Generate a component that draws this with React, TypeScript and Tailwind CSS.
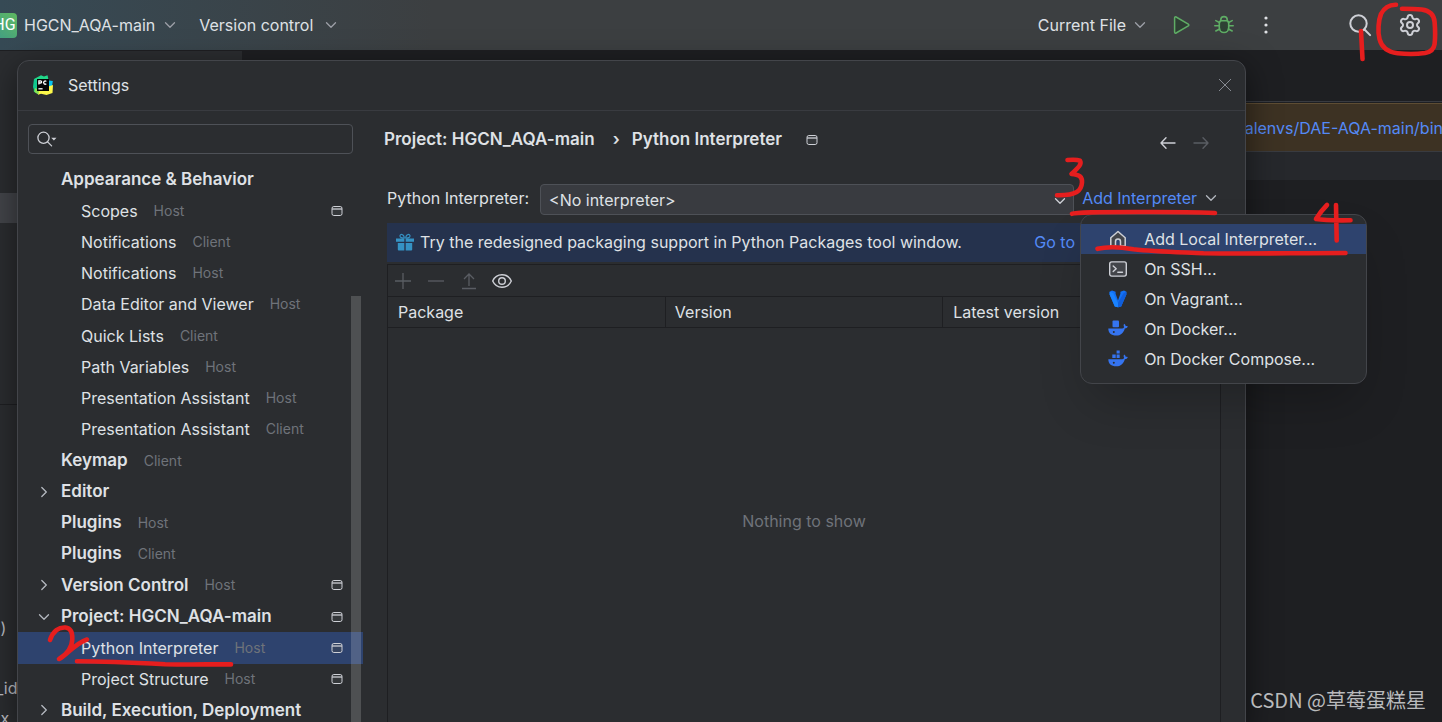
import type { ReactNode } from "react";
import { Settings } from "lucide-react";

type IconProps = { className?: string };

function Chevron({ className = "" }: IconProps) {
  return (
    <svg viewBox="0 0 12 12" className={`size-3 shrink-0 ${className}`} fill="none" stroke="currentColor" strokeWidth="1.3" strokeLinecap="round" strokeLinejoin="round">
      <path d="M1.5 3.8 6 8.3l4.5-4.5" />
    </svg>
  );
}

function WindowIcon({ className = "" }: IconProps) {
  return (
    <svg viewBox="0 0 12 12" className={`size-3 shrink-0 ${className}`} fill="none" stroke="#ced0d6">
      <rect x="1" y="1.5" width="10" height="9" rx="1.8" fill="#43454a" fillOpacity="0.4" />
      <path d="M1 4h10" strokeWidth="1.3" />
    </svg>
  );
}

function PlayIcon() {
  return (
    <svg viewBox="0 0 20 20" className="size-5" fill="#2e4034" stroke="#5fad65" strokeWidth="1.5" strokeLinejoin="round">
      <path d="M2.6 2.9c0-.9.8-1.3 1.5-.9l12.2 7.1c.7.4.7 1.4 0 1.8L4.1 18c-.7.4-1.5 0-1.5-.9z" />
    </svg>
  );
}

function BugIcon() {
  return (
    <svg viewBox="0 0 20 20" className="size-5" fill="none" stroke="#5fad65" strokeWidth="1.6" strokeLinecap="round" strokeLinejoin="round">
      <path d="M6.8 5.6v-.8a3.2 3.2 0 0 1 6.4 0v.8" />
      <path d="M7.6 5.8h4.8a2.3 2.3 0 0 1 2.3 2.3v4.7a4.7 4.7 0 0 1-9.4 0V8.1a2.3 2.3 0 0 1 2.3-2.3z" fill="#2e4034" />
      <path d="M.8 10.800h4.400M14.800 10.800h4.400M1.800 5.600l3.800 2M18.200 5.600l-3.800 2M1.800 16l3.900-2M18.200 16l-3.900-2" />
    </svg>
  );
}

function MoreIcon() {
  return (
    <svg viewBox="0 0 20 20" className="size-5" fill="#dfe1e5">
      <circle cx="10" cy="3" r="1.6" />
      <circle cx="10" cy="10" r="1.6" />
      <circle cx="10" cy="17" r="1.6" />
    </svg>
  );
}

function SearchIcon() {
  return (
    <svg viewBox="0 0 24 24" className="size-6" fill="none" stroke="#ced0d6" strokeWidth="2" strokeLinecap="round">
      <circle cx="10.5" cy="10.5" r="8.2" />
      <path d="m16.5 16.5 5.6 5.6" />
    </svg>
  );
}

function PyCharmLogo() {
  return (
    <svg viewBox="0 0 20 20" className="size-5" aria-hidden="true">
      <path d="M1 4 8 .2l3 1.2 3.5-1.2.8 3.2-4 6L5 19.2.8 16.5z" fill="#21d789" />
      <path d="m0 12 1-8 4 2 2 13-5-2z" fill="#12c98f" />
      <path d="m16 5.5 3.8.5-.6 4.5L15 14z" fill="#07c3f2" />
      <path d="m5 15.5 10-4 5-1.5-.5 8-6 2L8 18.8 5 19.8z" fill="#fcf84a" />
      <path d="m2 13 4 2-.5 4.5-4-2.5z" fill="#8be04e" />
      <rect x="4" y="4" width="12" height="12" fill="#050505" />
      <g fill="none" stroke="#fff" strokeWidth="1.3">
        <path d="M5.9 9.4V5.8h1.6a1.1 1.1 0 0 1 0 2.2H5.9M13.3 6.4a1.6 1.6 0 1 0 0 2.4" />
        <path d="M5.4 13.8h4.2" />
      </g>
    </svg>
  );
}

function GiftIcon() {
  return (
    <svg viewBox="0 0 18 18" className="size-[18px] shrink-0">
      <path d="M0 5.5h8.3V8.700H0zM9.700 5.500H18v3.200H9.700zM1.800 10.100h6.500V17.500h-5.500a1 1 0 0 1-1-1zM9.700 10.100h6.500v6.400a1 1 0 0 1-1 1H9.700z" fill="#3592c4" />
      <path d="M8.300 5C5.800 5.200 4 4.400 4 2.900 4 .7 7.900.6 8.300 5zM9.700 5c2.500.2 4.300-.6 4.300-2.100C14 .7 10.100.6 9.700 5z" fill="none" stroke="#3592c4" strokeWidth="1.2" />
    </svg>
  );
}

function HomeIcon() {
  return (
    <svg viewBox="0 0 20 20" className="size-5 shrink-0" fill="#43454a" stroke="#ced0d6" strokeWidth="1.5" strokeLinejoin="round">
      <path d="M2.800 8.700 10 2.500l7.200 6.200v8.200h-4.700v-4.400a2.500 2.500 0 0 0-5 0v4.400H2.800z" />
    </svg>
  );
}

function TerminalIcon() {
  return (
    <svg viewBox="0 0 20 20" className="size-5 shrink-0" fill="none" stroke="#ced0d6" strokeWidth="1.4" strokeLinecap="round" strokeLinejoin="round">
      <rect x="1.700" y="2.900" width="16.600" height="14.200" rx="2" fill="#43454a" />
      <path d="m5.200 7 3 2.800-3 2.800M9.800 13.200h4.700" />
    </svg>
  );
}

function VagrantIcon() {
  return (
    <svg viewBox="0 0 20 20" className="size-5 shrink-0">
      <path d="M1.600 2.800 4 1.600l3.600 1.200v2L10 11.500l2.400-6.700v-2L16 1.600l2.400 1.200v2.700l-5.200 11.900L10 18.300l-3.200-.9L1.600 5.500z" fill="#1270f5" />
      <path d="m1.600 2.800 3.600 1.300L11.600 17.700l-1.600.6-3.200-.9L1.600 5.500z" fill="#1a83ff" />
      <path d="m15.500 4.200 2.900-1.400v2.700l-5.200 11.900-3.200.9v-4.500z" fill="#105edb" />
    </svg>
  );
}

function Whale() {
  return (
    <path
      d="M.3 9.400h14c1-.1 1.700-.7 1.800-1.500-.7-.9-.6-2.200.1-3.100.9.5 1.400 1.300 1.500 2.200.8-.1 1.500 0 2.100.4-.5 1.300-1.500 1.900-3 2-1.300 4.600-4.200 7.100-8.500 7.100C3.200 16.500.3 13.800.3 9.400zM5.800 11.900a1 1 0 1 0 0 2 1 1 0 0 0 0-2z"
      fill="#3574f0"
      fillRule="evenodd"
    />
  );
}

function DockerIcon() {
  return (
    <svg viewBox="0 0 20 20" className="size-5 shrink-0">
      <rect x="4.500" y="1.500" width="6.500" height="6.700" rx="1" fill="#3574f0" />
      <Whale />
    </svg>
  );
}

function ComposeIcon() {
  return (
    <svg viewBox="0 0 20 20" className="size-5 shrink-0">
      <path d="M8.600 1.500h3.100v3.100H8.600zM4.300 5.600h3.400v3.300H4.300zM8.600 5.600h3.100v3.300H8.600z" fill="#3574f0" />
      <g transform="translate(0 .8)">
        <Whale />
      </g>
    </svg>
  );
}

type TreeRow = {
  label: string;
  tag?: string;
  level: 0 | 1;
  arrow?: "closed" | "open";
  project?: boolean;
  selected?: boolean;
};

const rows: TreeRow[] = [
  { label: "Appearance & Behavior", level: 0 },
  { label: "Scopes", tag: "Host", level: 1, project: true },
  { label: "Notifications", tag: "Client", level: 1 },
  { label: "Notifications", tag: "Host", level: 1 },
  { label: "Data Editor and Viewer", tag: "Host", level: 1 },
  { label: "Quick Lists", tag: "Client", level: 1 },
  { label: "Path Variables", tag: "Host", level: 1 },
  { label: "Presentation Assistant", tag: "Host", level: 1 },
  { label: "Presentation Assistant", tag: "Client", level: 1 },
  { label: "Keymap", tag: "Client", level: 0 },
  { label: "Editor", level: 0, arrow: "closed" },
  { label: "Plugins", tag: "Host", level: 0 },
  { label: "Plugins", tag: "Client", level: 0 },
  { label: "Version Control", tag: "Host", level: 0, arrow: "closed", project: true },
  { label: "Project: HGCN_AQA-main", level: 0, arrow: "open", project: true },
  { label: "Python Interpreter", tag: "Host", level: 1, project: true, selected: true },
  { label: "Project Structure", tag: "Host", level: 1, project: true },
  { label: "Build, Execution, Deployment", level: 0, arrow: "closed" },
];

function SettingsTree() {
  return (
    <ul className="flex flex-1 flex-col">
      {rows.map((row, i) => (
        <li key={i} className="flex min-h-[31px] flex-1">
          <button
            type="button"
            className={`flex w-full items-center pr-5 text-left whitespace-nowrap ${row.selected ? "bg-[#2e436e]" : ""} ${row.level === 1 ? "pl-[63px]" : "pl-5"}`}
          >
            {row.level === 0 && (
              <span className="flex w-[23px] shrink-0 text-[#b4b8bf]">
                {row.arrow && <Chevron className={row.arrow === "closed" ? "-rotate-90" : ""} />}
              </span>
            )}
            <span className={row.level === 0 ? "text-[17px] font-semibold" : ""}>{row.label}</span>
            {row.tag && <span className="ml-4 text-sm text-[#6f737a]">{row.tag}</span>}
            {row.project && <WindowIcon className="ml-auto" />}
          </button>
        </li>
      ))}
    </ul>
  );
}

function MenuItem({ icon, label, active = false }: { icon: ReactNode; label: string; active?: boolean }) {
  return (
    <button
      type="button"
      role="menuitem"
      className={`flex h-[30px] w-full items-center gap-4 pl-[27px] text-left whitespace-nowrap ${active ? "bg-[#2e436e]" : ""}`}
    >
      {icon}
      {label}
    </button>
  );
}

function TopBar() {
  return (
    <header className="flex h-[50px] shrink-0 items-center justify-between bg-linear-to-r from-[#364a55] via-[#3c3f41] via-30% to-[#3c3f41] whitespace-nowrap">
      <div className="flex items-center">
        <button type="button" className="-ml-2 flex items-center">
          <span className="flex h-[25px] w-[25px] items-center justify-center rounded bg-linear-to-tr from-[#3f9c86] to-[#5fb85f] font-['Roboto',sans-serif] text-base text-white">
            HG
          </span>
          <span className="ml-[7px]">HGCN_AQA-main</span>
          <Chevron className="ml-[9px] text-[#9da0a8]" />
        </button>
        <button type="button" className="ml-[23px] flex items-center">
          Version control
          <Chevron className="ml-3 text-[#9da0a8]" />
        </button>
      </div>
      <div className="flex items-center">
        <button type="button" className="flex items-center">
          Current File
          <Chevron className="ml-2 text-[#9da0a8]" />
        </button>
        <button type="button" aria-label="Run" className="ml-[26px]"><PlayIcon /></button>
        <button type="button" aria-label="Debug" className="ml-[22px]"><BugIcon /></button>
        <button type="button" aria-label="More actions" className="ml-[22px]"><MoreIcon /></button>
        <button type="button" aria-label="Search everywhere" className="ml-[72px]"><SearchIcon /></button>
        <button type="button" aria-label="Settings" className="mr-5 ml-[26px]">
          <Settings className="size-6 text-[#ced0d6]" />
        </button>
      </div>
    </header>
  );
}

function Editor() {
  return (
    <div className="flex flex-1 border-t border-[#1e1f22]">
      <div className="flex w-[242px] shrink-0 flex-col bg-[#2b2d30]">
        <div className="mt-[142px] h-[30px] bg-[#43454a]" />
        <div className="mt-[181px] border-t border-[#1e1f22]" />
        <pre className="mt-[208px] -ml-1 font-['Inter','Noto_Sans',sans-serif] leading-[30px] text-[#bcbec4]">{" )\n\n_id\n x,"}</pre>
      </div>
      <div className="flex flex-1 flex-col bg-[#1e1f22]">
        <div className="mt-[50px] border-t border-[#393b40]" />
        <div className="mt-px flex h-[49px] items-center justify-end overflow-hidden border-y border-t-[#5e4d33] border-b-[#393b40] bg-[#3d3223]">
          <a href="#interpreter" className="-mr-px whitespace-nowrap text-[#548af7]">/virtualenvs/DAE-AQA-main/bin</a>
        </div>
        <div className="h-7 bg-[#26282c]" />
      </div>
    </div>
  );
}

function InterpreterPanel() {
  return (
    <section className="flex min-w-0 flex-1 flex-col pr-6 pl-6">
      <div className="flex h-[73px] items-center whitespace-nowrap">
        <h2 className="mb-4 -ml-[3px] flex items-center text-[17px] font-semibold">
          Project: HGCN_AQA-main
          <span className="mr-3 ml-[18px]">›</span>
          Python Interpreter
          <WindowIcon className="ml-6" />
        </h2>
        <div className="mr-3 mb-2.5 ml-auto flex gap-[17px]">
          <button type="button" aria-label="Back">
            <svg viewBox="0 0 16 16" className="size-4" fill="none" stroke="#ced0d6" strokeWidth="1.4" strokeLinecap="round" strokeLinejoin="round">
              <path d="M15 8H1.300M6 2.800 1 8l5 5.200" />
            </svg>
          </button>
          <button type="button" aria-label="Forward">
            <svg viewBox="0 0 16 16" className="size-4" fill="none" stroke="#5a5d63" strokeWidth="1.4" strokeLinecap="round" strokeLinejoin="round">
              <path d="M1 8h13.700M10 2.800 15 8l-5 5.200" />
            </svg>
          </button>
        </div>
      </div>

      <div className="flex items-center">
        <label htmlFor="interpreter" className="mr-[11px] mb-1 whitespace-nowrap">Python Interpreter:</label>
        <div className="relative flex-1">
          <select id="interpreter" className="h-[31px] w-full appearance-none rounded border border-[#4e5157] bg-[#393b40] px-2 pt-px text-[#dfe1e5]">
            <option>&lt;No interpreter&gt;</option>
          </select>
          <Chevron className="pointer-events-none absolute top-[11px] right-2 text-[#ced0d6]" />
        </div>
        <div className="relative mr-1 mb-1 ml-2">
          <button type="button" aria-haspopup="menu" className="flex items-center whitespace-nowrap text-[#548af7]">
            Add Interpreter
            <Chevron className="ml-2 text-[#b4b8bf]" />
          </button>
          <div role="menu" className="absolute top-7 -left-0.5 z-10 w-[287px] rounded-xl border border-[#43454a] bg-[#2b2d30] pt-[9px] pb-[9px] shadow-2xl">
            <MenuItem icon={<HomeIcon />} label="Add Local Interpreter..." active />
            <MenuItem icon={<TerminalIcon />} label="On SSH..." />
            <MenuItem icon={<VagrantIcon />} label="On Vagrant..." />
            <MenuItem icon={<DockerIcon />} label="On Docker..." />
            <MenuItem icon={<ComposeIcon />} label="On Docker Compose..." />
          </div>
        </div>
      </div>

      <div className="mt-2 flex h-[39px] shrink-0 items-center overflow-hidden bg-[#25324d] pb-px pl-[9px] whitespace-nowrap">
        <GiftIcon />
        <span className="ml-1.5">Try the redesigned packaging support in Python Packages tool window.</span>
        <a href="#packages" className="mr-[146px] ml-auto text-[#548af7]">Go to</a>
      </div>

      <div className="mt-0.5 flex flex-1 flex-col border border-[#1e1f22]">
        <div className="flex h-[31px] shrink-0 items-center gap-[15px] pl-1.5 text-[#5a5d63]">
          <button type="button" aria-label="Install">
            <svg viewBox="0 0 18 18" className="size-[18px]" fill="none" stroke="currentColor" strokeWidth="1.3"><path d="M9 1v16M1 9h16" /></svg>
          </button>
          <button type="button" aria-label="Uninstall">
            <svg viewBox="0 0 18 18" className="size-[18px]" fill="none" stroke="currentColor" strokeWidth="1.3"><path d="M1 9h16" /></svg>
          </button>
          <button type="button" aria-label="Upgrade">
            <svg viewBox="0 0 18 18" className="size-[18px]" fill="none" stroke="currentColor" strokeWidth="1.3"><path d="M9 14V2.500M4 7l5-5 5 5M2 16.500h14" /></svg>
          </button>
          <button type="button" aria-label="Show early releases" className="-ml-0.5">
            <svg viewBox="0 0 22 18" className="h-[18px] w-[22px]" fill="none" stroke="#ced0d6" strokeWidth="1.4">
              <path d="M1.700 9C3.500 5 7 2.800 11 2.800S18.500 5 20.300 9c-1.800 4-5.300 6.200-9.300 6.200S3.500 13 1.700 9z" />
              <circle cx="11" cy="9" r="3.3" />
            </svg>
          </button>
        </div>
        <table className="w-full table-fixed border-collapse text-left">
          <thead>
            <tr className="h-[31px] border-y border-[#1e1f22]">
              <th className="border-r border-[#1e1f22] pl-2.5 font-normal">Package</th>
              <th className="border-r border-[#1e1f22] pl-[9px] font-normal">Version</th>
              <th className="pl-2.5 font-normal">Latest version</th>
            </tr>
          </thead>
        </table>
        <p className="flex flex-1 items-center justify-center pb-3 text-[#6f737a]">Nothing to show</p>
      </div>
    </section>
  );
}

function SettingsDialog() {
  return (
    <div role="dialog" aria-label="Settings" className="absolute top-[60px] right-[196px] -bottom-[5px] left-[17px] flex flex-col rounded-t-xl border border-[#43454a] bg-[#2b2d30] shadow-[0_8px_32px_rgba(0,0,0,0.5)]">
      <div className="flex h-[50px] shrink-0 items-center border-b border-[#393b40] pr-[13px] pb-0.5 pl-[15px]">
        <PyCharmLogo />
        <h1 className="ml-[15px]">Settings</h1>
        <button type="button" aria-label="Close" className="ml-auto">
          <svg viewBox="0 0 14 14" className="size-3.5" fill="none" stroke="#868a91"><path d="m1 1 12 12M13 1 1 13" /></svg>
        </button>
      </div>
      <div className="flex flex-1">
        <aside className="flex w-[345px] shrink-0 flex-col">
          <label className="mx-2.5 mt-[13px] mb-2.5 flex h-[30px] shrink-0 items-center rounded border border-[#4e5157] pl-2">
            <svg viewBox="0 0 20 16" className="h-4 w-5" fill="none" stroke="#ced0d6" strokeWidth="1.3" strokeLinecap="round">
              <circle cx="6.5" cy="6.8" r="5.6" />
              <path d="m10.600 10.900 4 4" />
              <path d="M14.200 6.800h5.300l-2.600 2.700z" fill="#ced0d6" stroke="none" />
            </svg>
            <input aria-label="Search settings" className="min-w-0 flex-1 bg-transparent outline-none" />
          </label>
          <div className="relative flex flex-1">
            <SettingsTree />
            <div className="absolute top-[132px] right-[2px] bottom-0 w-2.5 bg-white/17" />
          </div>
        </aside>
        <InterpreterPanel />
      </div>
    </div>
  );
}

function Annotations() {
  return (
    <div className="pointer-events-none absolute inset-0 z-20" aria-hidden="true">
      <svg viewBox="1342 0 100 64" className="absolute top-0 right-0 h-16 w-[100px]" fill="none" stroke="#e61e1e" strokeWidth="4.6" strokeLinecap="round" strokeLinejoin="round">
        <path d="M1396 4.700C1388 4.500 1384 8 1381 14c-2.500 6-3.500 18-1.500 25 2 8 7 13 18 14.200 9 1 19 1 27.500-.2 6-1 9-4 9.600-9 .8-7 .6-15 0-22-.6-8-5-11.500-13-12.500-7-.8-13-.8-19.600-.8" />
        <path d="m1361 31 1.500 28" />
      </svg>
      <svg viewBox="1050 150 320 110" className="absolute top-[150px] right-[72px] h-[110px] w-[320px]" fill="none" stroke="#e61e1e" strokeWidth="4.6" strokeLinecap="round" strokeLinejoin="round">
        <path d="M1067.500 160c5-.5 10-.4 12.500.7 2 3.500-1 6.300-8.500 13.300 8 .5 11 3 10.500 8.500-.6 8-5 13-25 12.700" />
        <path d="M1072 213.800c4-2 30-1.800 80-1.800 24 0 44 .3 63 1" />
        <path d="M1327 205c-4 4-8 9-11 14 9 1.500 22 1.500 34.500 1.300M1336 205l.7 35.500" />
        <path d="M1097.500 248.800c8-2 22-2 36 .4 22 2.500 50 3 70 4 45 .8 90-.2 142-.2" />
      </svg>
      <svg viewBox="40 620 200 52" className="absolute top-[620px] left-10 h-[52px] w-[200px]" fill="none" stroke="#e61e1e" strokeWidth="4.6" strokeLinecap="round" strokeLinejoin="round">
        <path d="M50 640c3-9 9-13 15.500-12.500 5 .5 7 5 6.800 11.500-.3 9-5 15-13.300 20 7-2.500 14-14.500 28-19.500" />
        <path d="M77 661.300c28 0 55 1.200 88 2.900 24 .6 45 0 66 .2" />
      </svg>
    </div>
  );
}

export default function App() {
  return (
    <div className="relative flex h-screen flex-col overflow-hidden bg-[#1e1f22] font-['Inter','Noto_Sans',sans-serif] text-base text-[#dfe1e5]">
      <TopBar />
      <Editor />
      <SettingsDialog />
      <Annotations />
      <p className="absolute right-4 bottom-2.5 font-['Noto_Sans_CJK_SC',sans-serif] text-xl leading-6 text-[#b9babc]">
        CSDN @草莓蛋糕星
      </p>
    </div>
  );
}
